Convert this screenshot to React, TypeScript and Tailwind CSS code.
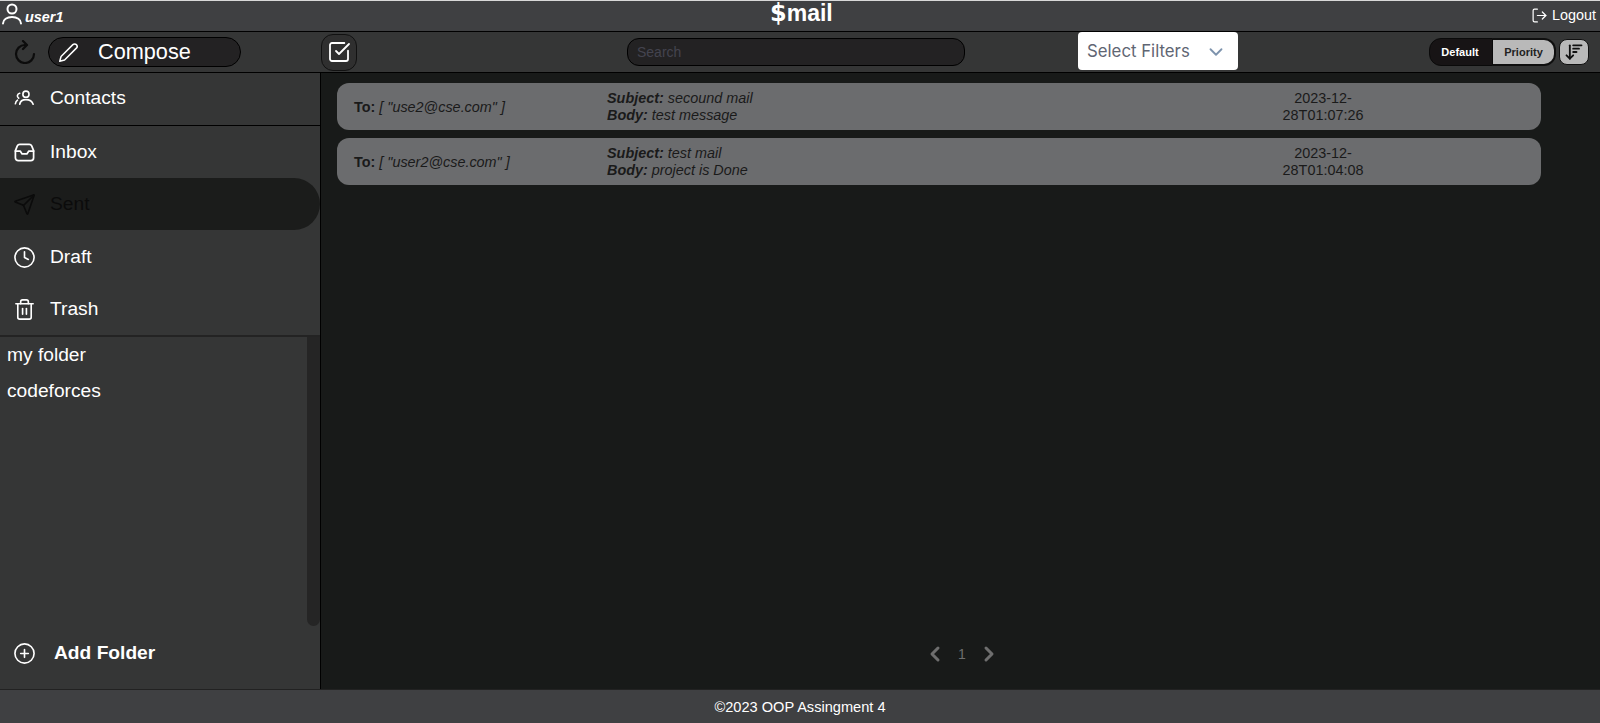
import React from 'react';
import {
  SquareCheckBig,
  LogOut,
  ChevronDown,
  ChevronLeft,
  ChevronRight,
  Send,
  Clock,
  Trash2,
  CirclePlus,
  ArrowDownWideNarrow,
} from 'lucide-react';
import { FiEdit2 } from 'react-icons/fi';

const ContactsIcon = () => (
  <svg width="23" height="23" viewBox="0 0 24 24" fill="none" stroke="currentColor" strokeWidth="1.7" strokeLinecap="round">
    <circle cx="13.500" cy="7.500" r="3.200" />
    <path d="M7 18c.5-3 3.300-4.800 6.500-4.800s6.500 1.800 7.500 4.800" />
    <path d="M7 6.500a2.800 2.800 0 0 0-1 5.200M2.500 17.500c.2-1.600 1-3 2.200-3.800" />
  </svg>
);

const InboxIcon = ({ className }: { className?: string }) => (
  <svg className={className} viewBox="0 0 24 24" fill="none" stroke="currentColor" strokeWidth="1.8" strokeLinecap="round" strokeLinejoin="round">
    <path d="M7 3.500h10c1.200 0 2 .6 2.500 1.600l2 5v7.400a3 3 0 0 1-3 3h-13a3 3 0 0 1-3-3v-7.400l2-5C5 4.100 5.800 3.500 7 3.500z" />
    <path d="M2.500 10.500h5l2 3h5l2-3h5" />
  </svg>
);

const UserIcon = () => (
  <svg width="22" height="22" viewBox="0 0 22 22" fill="none" stroke="currentColor" strokeWidth="2" strokeLinecap="round" className="-mt-1">
    <circle cx="11" cy="6" r="4.500" />
    <path d="M2 20.500c0-4 4-6.500 9-6.500s9 2.500 9 6.500" />
  </svg>
);

const ReloadIcon = () => (
  <svg width="24" height="24" viewBox="0 0 24 24" fill="none" stroke="#0c0c0c" strokeWidth="2.200" strokeLinecap="round" strokeLinejoin="round" className="ml-[13px]">
    <path d="M12 5a9 9 0 1 0 9 9" />
    <path d="M10 1l4 4-4 4" />
  </svg>
);

const navItems = [
  { label: 'Inbox', icon: InboxIcon, active: false, cls: 'h-[52px]' },
  { label: 'Sent', icon: Send, active: true, cls: 'h-[52px]' },
  { label: 'Draft', icon: Clock, active: false, cls: 'h-[53px] pt-[1px]' },
  { label: 'Trash', icon: Trash2, active: false, cls: 'h-[52px]' },
];

const mails = [
  { to: '[ "use2@cse.com" ]', subject: 'secound mail', body: 'test message', date: '2023-12-28T01:07:26' },
  { to: '[ "user2@cse.com" ]', subject: 'test mail', body: 'project is Done', date: '2023-12-28T01:04:08' },
];

export default function App() {
  return (
    <div className="h-[723px] flex flex-col overflow-hidden bg-[#181a19] font-['Liberation_Sans',sans-serif] text-white border-t border-[#d8d8d8]">
      {/* Top bar */}
      <header className="h-[31px] shrink-0 flex items-center justify-between bg-[#3f4042] border-b border-black relative">
        <div className="flex items-center pl-[1px]">
          <UserIcon />
          <span className="ml-[2px] text-[14.4px] font-bold italic mt-1">user1</span>
        </div>
        <div className="absolute left-[770px] -top-[1px] flex items-baseline text-[23px] leading-[26px] font-bold">
          <span className="font-['DejaVu_Sans',sans-serif] text-[24px]">$</span>
          <span>mail</span>
        </div>
        <div className="flex items-center gap-1 pr-1 text-[14.4px]">
          <LogOut className="w-[17px] h-[17px]" strokeWidth={1.7} />
          <span>Logout</span>
        </div>
      </header>

      {/* Toolbar */}
      <div className="h-[41px] shrink-0 flex items-center bg-[#353636] border-b border-black">
        <ReloadIcon />
        <div className="ml-[11px] w-[193px] h-[30px] rounded-full bg-[#232223] border border-black flex items-center">
          <FiEdit2 className="w-[21px] h-[21px] ml-[9px]" strokeWidth={1.7} />
          <span className="ml-[19px] text-[21.7px] leading-none">Compose</span>
        </div>
        <div className="ml-[80px] w-9 h-[37px] rounded-xl bg-[#2f2f2f] border border-[#111] flex items-center justify-center">
          <SquareCheckBig className="w-6 h-6" strokeWidth={1.8} />
        </div>
        <div className="ml-[270px] w-[338px] h-[28px] rounded-xl bg-[#232223] border border-black flex items-center pl-[9px] text-sm text-[#44444f]">
          Search
        </div>
        <div className="ml-[113px] w-[160px] h-[38px] -mt-[2px] pt-[2px] rounded bg-white flex items-center justify-between pl-[9px] pr-[11px] font-['Inter',sans-serif] text-[16.8px] text-[#5f6673]">
          <span>Select Filters</span>
          <ChevronDown className="w-[22px] h-[22px] text-[#7d93ad]" strokeWidth={2} />
        </div>
        <div className="ml-auto flex items-center text-[11px] font-bold">
          <div className="w-[64px] h-[28px] rounded-l-xl bg-[#171415] border border-[#0a0a0a] flex items-center justify-center pr-[2px]">Default</div>
          <div className="w-[63px] h-[28px] rounded-r-xl bg-[#b9b9b9] border-2 border-[#0f0f0f] border-l-0 flex items-center justify-center text-[#222]">Priority</div>
          <div className="ml-[3px] mr-[11px] w-[30px] h-[26px] rounded-lg bg-[#b9b9b9] border border-[#111] flex items-center justify-center text-[#111]">
            <ArrowDownWideNarrow className="w-5 h-5" strokeWidth={2.2} />
          </div>
        </div>
      </div>

      <div className="flex-1 min-h-0 flex">
        {/* Sidebar */}
        <aside className="w-[321px] shrink-0 flex flex-col bg-[#353636] border-r border-black">
          <div className="h-[53px] shrink-0 flex items-center gap-[14px] pl-[13px] pb-[1px] border-b border-black text-[19.2px]">
            <ContactsIcon />
            <span>Contacts</span>
          </div>
          {navItems.map((item) => (
            <div
              key={item.label}
              className={`${item.cls} shrink-0 flex items-center gap-[14px] pl-[13px] text-[19.2px] ${
                item.active ? 'rounded-r-[28px] bg-[#1b1c1b] text-[#0b0b0b]' : ''
              }`}
            >
              <item.icon className="w-[23px] h-[23px]" strokeWidth={1.7} />
              <span>{item.label}</span>
            </div>
          ))}
          <div className="flex-1 min-h-0 flex border-t-2 border-[#232323]">
            <div className="flex-1 flex flex-col pl-[7px] text-[19.2px]">
              <div className="h-[36px] flex items-center">my folder</div>
              <div className="h-[37px] flex items-center">codeforces</div>
            </div>
            <div className="w-[13px] h-[289px] rounded-b-lg bg-[#252525]" />
          </div>
          <div className="h-[62px] shrink-0 flex items-center pl-[13px] pb-[10px] text-[19.2px] font-bold">
            <CirclePlus className="w-[23px] h-[23px]" strokeWidth={1.7} />
            <span className="ml-[18px]">Add Folder</span>
          </div>
        </aside>

        {/* Mail list */}
        <main className="flex-1 flex flex-col pt-[10px] pl-4">
          <div className="flex flex-col gap-2 w-[1204px]">
            {mails.map((mail) => (
              <div key={mail.date} className="h-[47px] pt-[1px] rounded-xl bg-[#6b6c6e] flex items-center text-[14.4px] text-[#1a1a1a] leading-[17.5px]">
                <div className="w-[270px] pl-[17px] pt-[2px]">
                  <b>To: </b>
                  <i>{mail.to}</i>
                </div>
                <div className="w-[600px] italic">
                  <div><b>Subject: </b>{mail.subject}</div>
                  <div><b>Body: </b>{mail.body}</div>
                </div>
                <div className="w-[100px] ml-[66px] text-center">{mail.date.slice(0, 8)}<br />{mail.date.slice(8)}</div>
              </div>
            ))}
          </div>
          <div className="mt-auto mb-[23px] ml-[586px] flex items-center gap-[11px] text-[#6e6e6e] text-sm">
            <ChevronLeft className="w-6 h-6" strokeWidth={3} />
            <span>1</span>
            <ChevronRight className="w-6 h-6" strokeWidth={3} />
          </div>
        </main>
      </div>

      {/* Footer */}
      <footer className="h-[34px] shrink-0 flex items-center justify-center pt-[3px] bg-[#3f4042] border-t border-[#222] text-[14.6px]">
        ©2023 OOP Assingment 4
      </footer>
    </div>
  );
}
